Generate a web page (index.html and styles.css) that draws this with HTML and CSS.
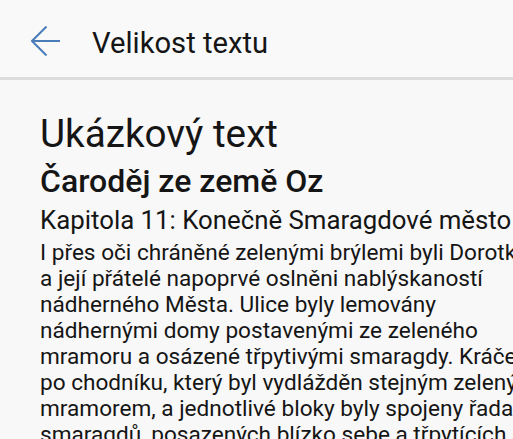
FILE: index.html
```html
<!DOCTYPE html>
<html lang="cs">
<head>
    <meta charset="UTF-8">
    <meta name="viewport" content="width=device-width, initial-scale=1.0">
    <title>Velikost textu</title>
    <link rel="stylesheet" href="styles.css">
</head>
<body>
    <div class="header">
        <svg class="back" width="30" height="30" viewBox="0 0 30 30">
            <path d="M1 15 H29 M15.5 0.5 L1 15 L15.5 29.5" fill="none" stroke="#4a7cba" stroke-width="2"/>
        </svg>
        <h1 class="title">Velikost textu</h1>
    </div>
    <div class="sample">
        <p class="sample-label">Ukázkový text</p>
        <h2 class="book">Čaroděj ze země Oz</h2>
        <h3 class="chapter">Kapitola 11: Konečně Smaragdové město</h3>
        <p class="body-text">
            I přes oči chráněné zelenými brýlemi byli Dorotka<br>
            a její přátelé napoprvé oslněni nablýskaností<br>
            nádherného Města. Ulice byly lemovány<br>
            nádhernými domy postavenými ze zeleného<br>
            mramoru a osázené třpytivými smaragdy. Kráčeli<br>
            po chodníku, který byl vydlážděn stejným zeleným<br>
            mramorem, a jednotlivé bloky byly spojeny řadami<br>
            smaragdů, posazených blízko sebe a třpytících se
        </p>
    </div>
</body>
</html>
```

FILE: styles.css
```css
* {
    margin: 0;
    padding: 0;
    box-sizing: border-box;
}

body {
    font-family: Roboto, "Noto Sans", sans-serif;
    background: #f8f8f8;
    color: #151515;
    width: 513px;
    height: 439px;
    overflow: hidden;
}

.header {
    height: 80px;
    padding: 4px 0 0 31px;
    display: flex;
    align-items: center;
    background: #f9f9f9;
    border-bottom: 3px solid #dcdcdc;
}

.back {
    flex-shrink: 0;
}

.title {
    font-size: 29.2px;
    font-weight: 400;
    line-height: 34px;
    padding-top: 4px;
    margin-left: 31px;
}

.sample {
    padding: 31px 0 0 40px;
    white-space: nowrap;
}

.sample-label {
    font-size: 38.7px;
    margin-bottom: 6px;
}

.book {
    font-size: 32px;
    font-weight: 500;
    margin-bottom: 5px;
}

.chapter {
    font-size: 25.8px;
    font-weight: 400;
    margin-bottom: 5px;
}

.body-text {
    font-size: 22.6px;
    line-height: 26px;
}
```
